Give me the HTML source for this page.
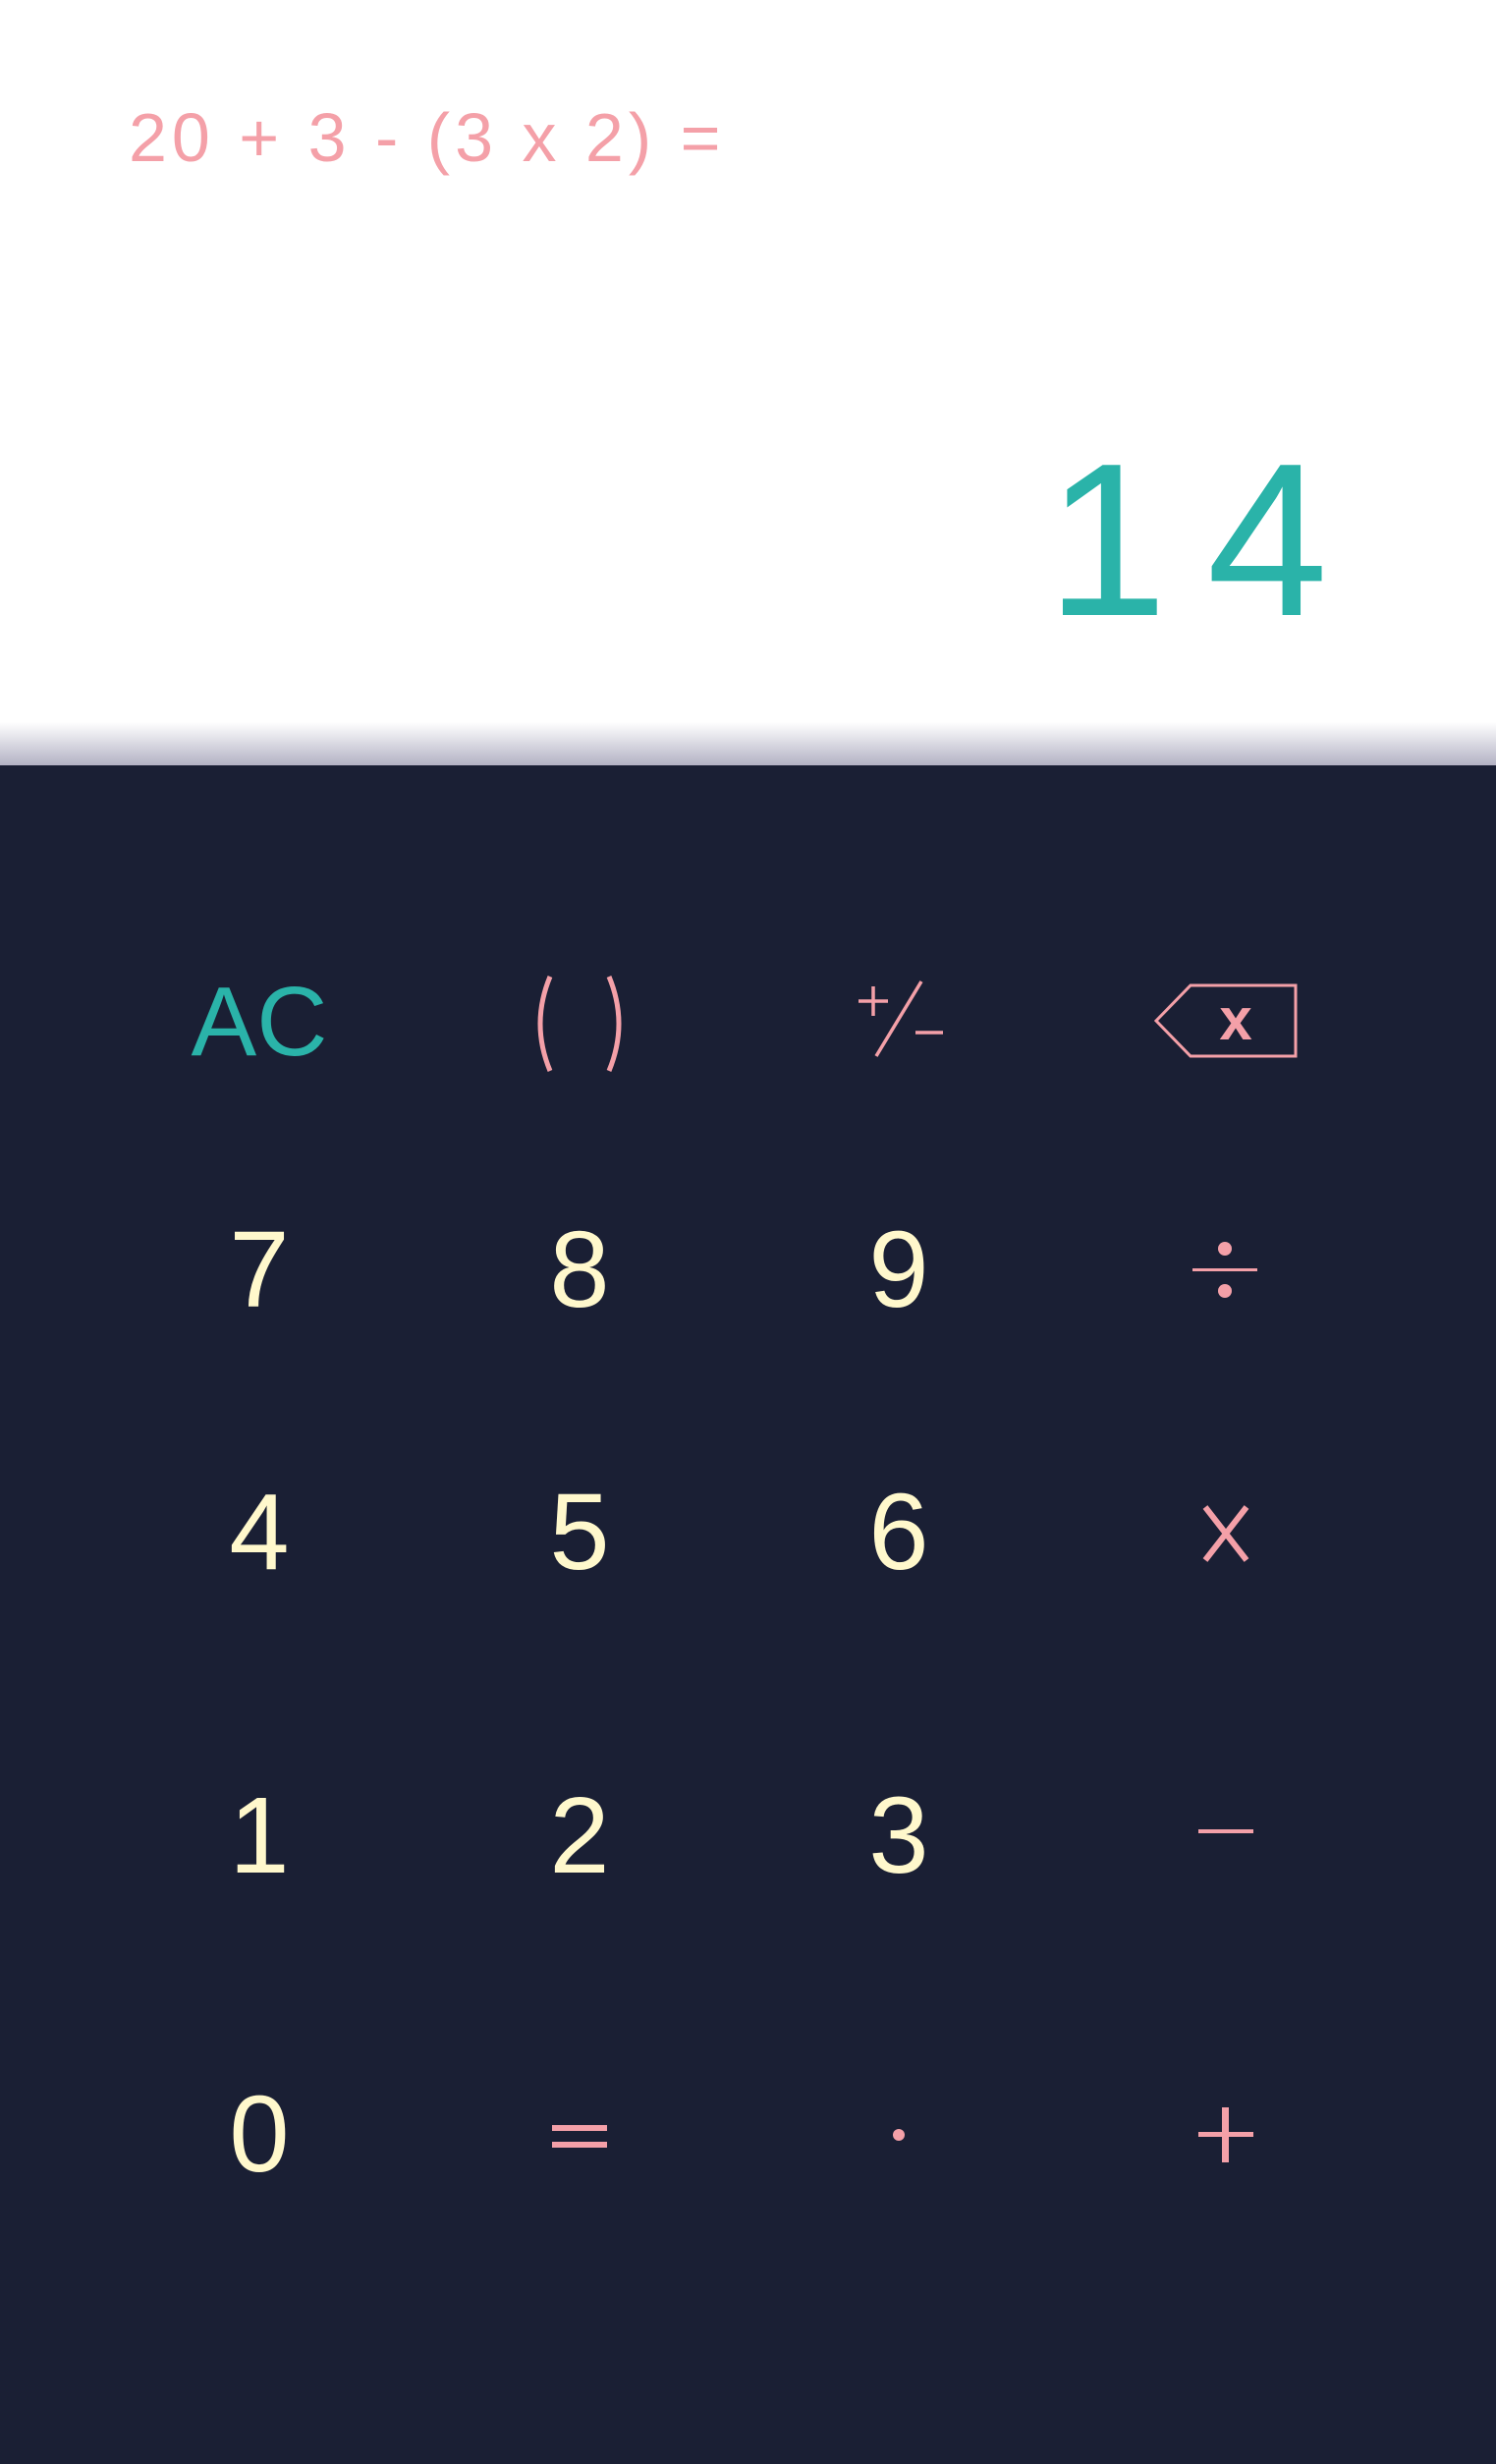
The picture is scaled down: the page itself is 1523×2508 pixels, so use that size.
<!DOCTYPE html>
<html><head><meta charset="utf-8"><style>
html,body{margin:0;padding:0}
body{width:1523px;height:2508px;position:relative;overflow:hidden;background:#fff;font-family:"Liberation Sans",sans-serif}
.top{position:absolute;left:0;top:0;width:1523px;height:779px;background:linear-gradient(#fff 0,#fff 735px,#b3b2c4 779px)}
.pad{position:absolute;left:0;top:779px;width:1523px;height:1729px;background:#1a1f34}
.expr{position:absolute;left:131px;top:100px;font-size:70px;color:#f4a0a8;letter-spacing:5px;font-weight:normal;line-height:80px;white-space:pre}
.res{position:absolute;right:131px;top:430px;font-size:222px;color:#2ab3a9;line-height:240px;letter-spacing:40px}
.k{position:absolute;width:300px;text-align:center;font-size:110px;line-height:120px;color:#fff8cc;transform:translate(-50%,-50%)}
svg{position:absolute}
</style></head><body>
<div class="top"></div>
<div class="pad"></div>
<div class="expr">20 + 3 - (3 x 2) =</div>
<div class="res">14</div>

<div class="k" style="left:264px;top:1040px;color:#2ab3a9;font-size:100px">AC</div>
<svg style="left:530px;top:990px" width="120" height="105"><g stroke="#f4a0a8" stroke-width="5" fill="none"><path d="M30 4Q10 52 30 100"/><path d="M90 4Q110 52 90 100"/></g></svg>
<svg style="left:870px;top:995px" width="100" height="82"><g stroke="#f4a0a8" stroke-width="3.5" fill="none"><path d="M4 24H34M19 9V39"/><path d="M68 4L22 80"/><path d="M62 56H90"/></g></svg>
<svg style="left:1174px;top:1000px" width="150" height="78"><g stroke="#f4a0a8" stroke-width="3" fill="none"><path d="M38 3H145V75H38L3 39Z"/></g><text x="84" y="58" font-family="Liberation Sans" font-weight="bold" font-size="60" fill="#f4a0a8" text-anchor="middle">x</text></svg>

<div class="k" style="left:264px;top:1293px">7</div>
<div class="k" style="left:590px;top:1293px">8</div>
<div class="k" style="left:915px;top:1293px">9</div>
<svg style="left:1212px;top:1262px" width="70" height="62"><g fill="#f4a0a8"><circle cx="35" cy="9" r="7"/><circle cx="35" cy="52" r="7"/><rect x="2" y="29" width="66" height="3"/></g></svg>

<div class="k" style="left:264px;top:1560px">4</div>
<div class="k" style="left:590px;top:1560px">5</div>
<div class="k" style="left:915px;top:1560px">6</div>
<svg style="left:1222px;top:1532px" width="52" height="58"><path d="M5 2L47 56M47 2L5 56" stroke="#f4a0a8" stroke-width="6"/></svg>

<div class="k" style="left:264px;top:1869px">1</div>
<div class="k" style="left:590px;top:1869px">2</div>
<div class="k" style="left:915px;top:1869px">3</div>
<svg style="left:1220px;top:1860px" width="56" height="8"><rect x="0" y="2" width="56" height="4" fill="#f4a0a8"/></svg>

<div class="k" style="left:264px;top:2173px">0</div>
<svg style="left:560px;top:2160px" width="60" height="30"><g fill="#f4a0a8"><rect x="2" y="3" width="56" height="6"/><rect x="2" y="20" width="56" height="6"/></g></svg>
<svg style="left:905px;top:2163px" width="20" height="20"><circle cx="10" cy="10" r="6" fill="#f4a0a8"/></svg>
<svg style="left:1220px;top:2145px" width="56" height="56"><g fill="#f4a0a8"><rect x="0" y="25" width="56" height="5"/><rect x="24" y="0" width="7" height="56"/></g></svg>
</body></html>
